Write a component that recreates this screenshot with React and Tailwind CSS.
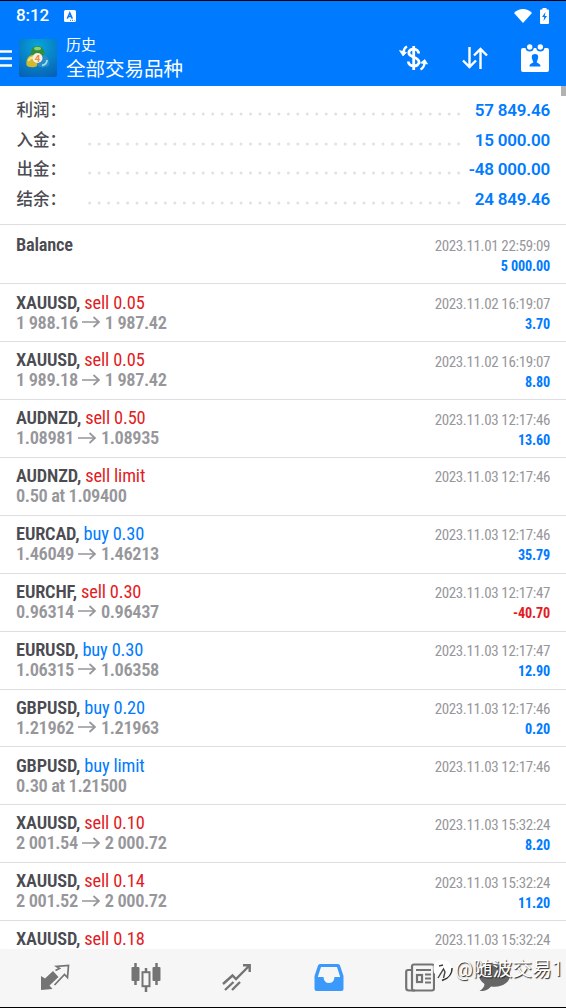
import clsx from 'clsx';

const summary = [
  { label: '利润', value: '57 849.46' },
  { label: '入金', value: '15 000.00' },
  { label: '出金', value: '-48 000.00' },
  { label: '结余', value: '24 849.46' }
];

const deals = [
  { symbol: 'XAUUSD', side: 'sell', volume: '0.05', open: '1 988.16', close: '1 987.42', date: '2023.11.02 16:19:07', profit: '3.70' },
  { symbol: 'XAUUSD', side: 'sell', volume: '0.05', open: '1 989.18', close: '1 987.42', date: '2023.11.02 16:19:07', profit: '8.80' },
  { symbol: 'AUDNZD', side: 'sell', volume: '0.50', open: '1.08981', close: '1.08935', date: '2023.11.03 12:17:46', profit: '13.60' },
  { symbol: 'AUDNZD', side: 'sell', volume: 'limit', note: '0.50 at 1.09400', date: '2023.11.03 12:17:46' },
  { symbol: 'EURCAD', side: 'buy', volume: '0.30', open: '1.46049', close: '1.46213', date: '2023.11.03 12:17:46', profit: '35.79' },
  { symbol: 'EURCHF', side: 'sell', volume: '0.30', open: '0.96314', close: '0.96437', date: '2023.11.03 12:17:47', profit: '-40.70' },
  { symbol: 'EURUSD', side: 'buy', volume: '0.30', open: '1.06315', close: '1.06358', date: '2023.11.03 12:17:47', profit: '12.90' },
  { symbol: 'GBPUSD', side: 'buy', volume: '0.20', open: '1.21962', close: '1.21963', date: '2023.11.03 12:17:46', profit: '0.20' },
  { symbol: 'GBPUSD', side: 'buy', volume: 'limit', note: '0.30 at 1.21500', date: '2023.11.03 12:17:46' },
  { symbol: 'XAUUSD', side: 'sell', volume: '0.10', open: '2 001.54', close: '2 000.72', date: '2023.11.03 15:32:24', profit: '8.20' },
  { symbol: 'XAUUSD', side: 'sell', volume: '0.14', open: '2 001.52', close: '2 000.72', date: '2023.11.03 15:32:24', profit: '11.20' },
  { symbol: 'XAUUSD', side: 'sell', volume: '0.18', date: '2023.11.03 15:32:24' }
];

const AppLogo = () => (
  <svg viewBox="0 0 38 38" className="ml-[7px] h-[38px] w-[38px]">
    <defs>
      <radialGradient id="logoBg" cx="0.5" cy="0.2" r="0.9">
        <stop offset="0" stopColor="#08a6dc" />
        <stop offset="1" stopColor="#0660b4" />
      </radialGradient>
    </defs>
    <rect width="38" height="38" rx="2" fill="url(#logoBg)" />
    <path d="M12 17 C11 12 13 7 18.5 7 C24 7 26 12 25.5 17 L19 20Z" fill="#2f8f3f" />
    <ellipse cx="18.5" cy="9.5" rx="3.5" ry="1.8" fill="#8ccf78" />
    <path d="M7.5 26 C6.5 20 10 16 14 16 L19 20 L18 27 C15 29 8.5 28.5 7.5 26Z" fill="#d3b92e" />
    <path d="M9.5 22 Q11 18.5 14 18.5" fill="none" stroke="#f4e78e" strokeWidth="1.8" />
    <path d="M19 20 L24 16 C28 16 31 21 30 26 C28 29 21 29 19 27Z" fill="#2a8cc4" />
    <path d="M23 26.5 Q28 25.5 28 21" fill="none" stroke="#9bdcf0" strokeWidth="1.8" />
    <circle cx="18.5" cy="19" r="5" fill="#f7eee5" />
    <text x="18.5" y="22.5" textAnchor="middle" fontFamily="Roboto, sans-serif" fontSize="9.5" fontWeight="700" fill="#ee8a38">4</text>
  </svg>
);

const Header = () => (
  <header className="h-[86px] border-t border-black bg-[#007bff] text-white">
    <div className="flex h-[29px] items-center pl-4 pr-[17px]">
      <span className="text-[17px] font-medium leading-none tracking-[-0.1px]">8:12</span>
      <svg viewBox="0 0 12 12" className="ml-[15px] h-3 w-3">
        <rect width="12" height="12" rx="1.5" fill="#fff" />
        <path d="M3.3 8.6 L5.8 2.8 L8.3 8.6 M4.3 6.6 H7.3" fill="none" stroke="#007bff" strokeWidth="1.5" />
        <path d="M6 10.3 H10.5" stroke="#007bff" strokeWidth="1" strokeDasharray="1 1" />
      </svg>
      <svg viewBox="0 0 18 14" className="ml-auto h-[14px] w-[18px]">
        <path d="M0 4 C5 -1.2 13 -1.2 18 4 L9 14Z" fill="#fff" />
      </svg>
      <svg viewBox="0 0 9 16" className="ml-2 h-4 w-[9px]">
        <path d="M2.5 0 H6.5 V1.5 H8 Q9 1.5 9 2.5 V15 Q9 16 8 16 H1 Q0 16 0 15 V2.5 Q0 1.5 1 1.5 H2.5Z" fill="#fff" />
        <path d="M5.5 4 L2 9 H4.2 L3.5 13 L7 8 H4.8Z" fill="#007bff" />
      </svg>
    </div>
    <div className="flex h-14 items-center pr-[17px]">
      <svg viewBox="0 0 12 17" className="h-[17px] w-3">
        <path d="M0 1.5 H12 M0 8.5 H12 M0 15.5 H12" stroke="#fff" strokeWidth="2.5" />
      </svg>
      <AppLogo />
      <div className="ml-[9px] flex flex-col pt-px">
        <span className="text-[15px] leading-[21px]">历史</span>
        <span className="text-[19.5px] leading-[27px]">全部交易品种</span>
      </div>
      <svg viewBox="0 0 30 26" className="ml-auto h-[26px] w-[30px]" fill="none" stroke="#fff">
        <path d="M19.7 8.5 C19.7 2.8 9.8 2.8 9.8 7.8 C9.8 13 20 11.5 20 17 C20 22.3 9.5 22.3 9.3 16.5" strokeWidth="2.8" />
        <path d="M14.7 1 V25" strokeWidth="2.8" />
        <path d="M8 1.5 C5.8 2.6 4.8 4.2 4.5 7" strokeWidth="2.4" />
        <path d="M0.5 5.5 L7.5 7.5 L4 11Z M28.5 19 L21.5 18 L25.8 14.5Z" fill="#fff" strokeWidth="0.7" />
        <path d="M25.5 18 C25.3 21.5 24 23.2 21.5 24.5" strokeWidth="2.4" />
      </svg>
      <svg viewBox="0 0 26 24" className="ml-[33px] h-6 w-[26px]" fill="none" stroke="#fff" strokeWidth="2.4">
        <path d="M7.5 1 V21 M1 14.5 L7.5 21 L14 14.5 M18.5 23 V3 M12 9.5 L18.5 3 L25 9.5" />
      </svg>
      <svg viewBox="0 0 28 28" className="ml-[33px] h-7 w-7">
        <path d="M2 4 H4.5 A4.2 4.2 0 0 0 12.8 4 H15.2 A4.2 4.2 0 0 0 23.5 4 H26 Q28 4 28 6 V26 Q28 28 26 28 H2 Q0 28 0 26 V6 Q0 4 2 4Z" fill="#fff" />
        <circle cx="8.7" cy="3" r="2.7" fill="#fff" />
        <circle cx="19.3" cy="3" r="2.7" fill="#fff" />
        <path d="M14 10 C10.5 10 10.3 13 11.3 15.5 L12.3 18 C12 19.5 8.5 19 8.5 22.5 H19.5 C19.5 19 16 19.5 15.7 18 L16.7 15.5 C17.7 13 17.5 10 14 10Z" fill="#007bff" />
      </svg>
    </div>
  </header>
);

const SummaryRow = ({ label, value }) => (
  <div className="flex h-[29.5px] items-center px-4">
    <span className="w-[68px] pl-[0.5px] pt-[2px] text-[16.5px] font-medium text-[#4b4b52]">{label}：</span>
    <svg className="mt-[7px] h-1 w-[378px] shrink-0">
      <path d="M5.7 2 H378" stroke="#e1e1e3" strokeWidth="3" strokeLinecap="round" strokeDasharray="0 9.46" />
    </svg>
    <span className="flex-1 whitespace-nowrap text-right text-[17px] font-semibold tracking-[-0.2px] text-[#007bff]">
      <span className="float-right">{value}</span>
    </span>
  </div>
);

const Arrow = () => (
  <svg viewBox="0 0 18 12" className="mx-[4.5px] inline-block h-3 w-[18px] align-[0.5px]" fill="none" stroke="#97979b" strokeWidth="1.7">
    <path d="M0 6 H17 M11.5 1 L17 6 L11.5 11" />
  </svg>
);

const DealRow = ({ deal }) => (
  <div className="flex h-[57.88px] shrink-0 justify-between border-t border-[#dedee1] px-4 pt-[8.1px] font-stretch-condensed">
    <div className="text-[18.4px] leading-5">
      <div className="font-semibold tracking-[-0.17px] text-[#4b4b52]">
        {deal.symbol},{' '}
        <span className={clsx('font-normal', deal.side === 'buy' ? 'text-[#007bff]' : 'text-[#e31b23]')}>
          {deal.side} {deal.volume}
        </span>
      </div>
      <div className="font-semibold tracking-[-0.4px] text-[#97979b]">
        {deal.note}
        {deal.open && <>{deal.open}<Arrow />{deal.close}</>}
      </div>
    </div>
    <div className="pt-[1.2px] text-right">
      <div className="text-[15px] leading-5 tracking-[-0.35px] text-[#97979b]">{deal.date}</div>
      {deal.profit && (
        <div className={clsx('text-[14.2px] font-bold leading-5 tracking-[-0.15px]', deal.profit.startsWith('-') ? 'text-[#e31b23]' : 'text-[#007bff]')}>
          {deal.profit}
        </div>
      )}
    </div>
  </div>
);

const NavBar = () => (
  <nav className="relative flex h-[59px] shrink-0 items-start border-b border-black bg-[#f6f6f6] pt-[14px] text-[#747474]">
    <svg viewBox="0 0 30 28" className="ml-10 h-7 w-[30px]">
      <path d="M1 13 L5 15.5 L13 8 L18.5 14 L9.5 22.5 L12.5 26 L1 27Z" fill="currentColor" />
      <path d="M15.5 7.5 L19.5 5.5 L16.5 3.5 L28.5 2.5 L27.5 14.5 L24.5 11.5 L14.5 22" fill="none" stroke="currentColor" strokeWidth="1.7" />
    </svg>
    <svg viewBox="0 0 30 30" className="ml-[61px] h-[30px] w-[30px]">
      <path d="M4.5 0 V22 M25.5 0 V22 M15 5 V10 M15 23 V29" stroke="currentColor" strokeWidth="2.5" />
      <rect x="0.5" y="4" width="8" height="14" rx="1" fill="currentColor" />
      <rect x="21.5" y="4" width="8" height="14" rx="1" fill="currentColor" />
      <rect x="11.5" y="9.2" width="7" height="14" fill="none" stroke="currentColor" strokeWidth="2" />
    </svg>
    <svg viewBox="0 0 30 28" className="ml-[61px] h-7 w-[30px]" fill="none" stroke="currentColor" strokeWidth="2.4">
      <path d="M1 21 L10.5 12.5 L14 16 L27 3 M21 2.3 H27.7 V9" />
      <path d="M3 27 L11.5 19 M10 27 L18 19" />
    </svg>
    <svg viewBox="0 0 30 28" className="ml-[62px] h-7 w-[30px]" fill="#3c99fc">
      <path fillRule="evenodd" d="M6 1 H24 Q25.5 1 26 2.5 L29.5 13 V26 Q29.5 28 27.5 28 H2.5 Q0.5 28 0.5 26 V13 L4 2.5 Q4.5 1 6 1Z M7 4 L3.8 14 H9.5 Q10 20 15 20 Q20 20 20.5 14 H26.2 L23 4Z" />
    </svg>
    <svg viewBox="0 0 30 29" className="ml-[61px] h-[29px] w-[30px]" fill="none" stroke="currentColor" strokeWidth="2.2">
      <rect x="7" y="1.5" width="22" height="26" rx="2" />
      <path d="M6.5 7 H3 Q1.2 7 1.2 9 V25 Q1.2 27.5 4 27.5 H10" />
      <rect x="12" y="12" width="5" height="7" />
      <path d="M11 7 H26 M20 11.5 H26 M20 15.5 H26 M20 19.5 H26" />
    </svg>
    <svg viewBox="0 0 31 29" className="ml-[44px] h-[29px] w-[31px]" fill="#666">
      <path d="M15.5 1 C6 1 0 6 0 12 C0 16 2.5 19 5.5 21 C5.5 24 3 26.5 0.5 28 C6 28.5 10 26 12 23.5 C23 25 31 19.5 31 12 C31 5.5 24 1 15.5 1Z" />
    </svg>
    <div className="absolute left-[433px] top-[7px] flex items-center whitespace-nowrap text-white">
      <svg viewBox="0 0 20 24" className="h-6 w-5">
        <path d="M9 22.5 L14 20 Q19 16 19 10" fill="none" stroke="#333" strokeWidth="1.6" />
        <path d="M1 15 C-1 7 2 2 9 2 C16 2 19 6 18 12 C17 18 14 20 10 21 L12 15 L10 11 L5 18Z" fill="#fff" />
        <path d="M5 20 L10.5 11 L12 14 L10.5 20 M6 8 L10 7" fill="none" stroke="#444" strokeWidth="1.4" />
      </svg>
      <span className="ml-[2px] text-[19.8px] leading-7 [text-shadow:1px_1px_1px_#222]">@随波交易1</span>
    </div>
  </nav>
);

export default function App() {
  return (
    <div className="relative flex h-[1008px] w-[566px] flex-col overflow-hidden bg-white font-['Roboto','Noto_Sans_CJK_SC',sans-serif]">
      <Header />
      <div className="absolute right-0 top-[86px] h-[10px] w-[5px] bg-[#b2b2b2]" />
      <main className="flex min-h-0 flex-1 flex-col overflow-hidden">
        <section className="h-[138.3px] shrink-0 pt-[10px]">
          {summary.map((row) => (
            <SummaryRow key={row.label} label={row.label} value={row.value} />
          ))}
        </section>
        <div className="flex h-[59.2px] shrink-0 justify-between border-t border-[#dedee1] px-4 pt-[10px] font-stretch-condensed">
          <div className="text-[18.4px] font-semibold leading-5 tracking-[-0.25px] text-[#4b4b52]">Balance</div>
          <div className="pt-[0.6px] text-right">
            <div className="text-[15px] leading-5 tracking-[-0.35px] text-[#97979b]">2023.11.01 22:59:09</div>
            <div className="text-[14.2px] font-bold leading-5 tracking-[-0.15px] text-[#007bff]">5 000.00</div>
          </div>
        </div>
        {deals.map((deal, i) => (
          <DealRow key={i} deal={deal} />
        ))}
      </main>
      <NavBar />
    </div>
  );
}
